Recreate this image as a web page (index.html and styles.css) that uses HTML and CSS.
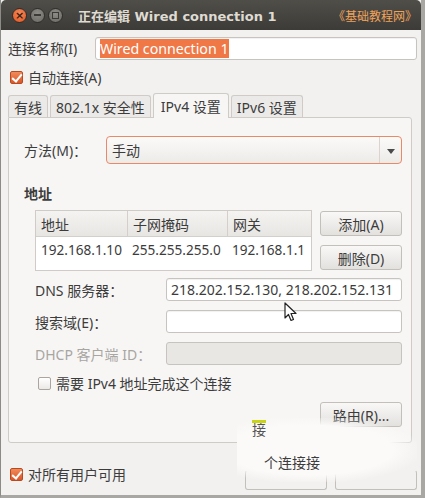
FILE: index.html
```html
<!DOCTYPE html>
<html lang="zh">
    <head>
        <meta charset="utf-8">
        <title>正在编辑 Wired connection 1</title>
        <link rel="stylesheet" href="styles.css">
    </head>
    <body>
        <div class="window">
            <div class="titlebar">
                <div class="wm-buttons">
                    <span class="wm-btn close">×</span>
                    <span class="wm-btn min"><i class="bar"></i></span>
                    <span class="wm-btn max"><i class="box"></i></span>
                </div>
                <div class="title">正在编辑 Wired connection 1</div>
                <div class="brand">《基础教程网》</div>
            </div>

            <div class="content">
                <div class="name-row">
                    <label class="name-label">连接名称(I)</label>
                    <div class="entry name-entry"><span class="selected">Wired connection 1</span></div>
                </div>

                <div class="check-row auto">
                    <span class="check on"></span>
                    <span>自动连接(A)</span>
                </div>

                <div class="tabs">
                    <div class="tab">有线</div>
                    <div class="tab">802.1x 安全性</div>
                    <div class="tab active">IPv4 设置</div>
                    <div class="tab">IPv6 设置</div>
                </div>

                <div class="panel">
                    <div class="method-row">
                        <span class="method-label">方法(M)：</span>
                        <div class="combo">
                            <span class="combo-text">手动</span>
                            <span class="combo-arrow"></span>
                        </div>
                    </div>

                    <div class="section-title">地址</div>

                    <div class="addr-row">
                        <div class="addr-table">
                            <div class="addr-head">
                                <div class="col c1">地址</div>
                                <div class="col c2">子网掩码</div>
                                <div class="col c3">网关</div>
                            </div>
                            <div class="addr-data">
                                <div class="col c1">192.168.1.10</div>
                                <div class="col c2">255.255.255.0</div>
                                <div class="col c3">192.168.1.1</div>
                            </div>
                        </div>
                        <div class="addr-buttons">
                            <div class="button">添加(A)</div>
                            <div class="button">删除(D)</div>
                        </div>
                    </div>

                    <div class="form">
                        <div class="form-row">
                            <span class="form-label">DNS 服务器：</span>
                            <div class="entry field">218.202.152.130, 218.202.152.131</div>
                        </div>
                        <div class="form-row">
                            <span class="form-label">搜索域(E)：</span>
                            <div class="entry field"></div>
                        </div>
                        <div class="form-row">
                            <span class="form-label dim">DHCP 客户端 ID：</span>
                            <div class="entry field disabled"></div>
                        </div>
                    </div>

                    <div class="check-row require">
                        <span class="check"></span>
                        <span>需要 IPv4 地址完成这个连接</span>
                    </div>

                    <div class="route-row">
                        <div class="button route">路由(R)...</div>
                    </div>
                </div>

                <div class="footer">
                    <div class="check-row">
                        <span class="check on"></span>
                        <span>对所有用户可用</span>
                    </div>
                    <div class="footer-buttons">
                        <div class="button ghost"></div>
                        <div class="button ghost"></div>
                    </div>
                </div>
            </div>

            <div class="smear">
                <span class="smear-a">接</span>
                <span class="smear-b">个连接接</span>
            </div>
            <svg class="cursor" width="14" height="20" viewBox="0 0 14 20">
                <path d="M1 1 L1 16 L4.5 12.5 L7 18.5 L9.5 17.5 L7 11.5 L12 11.5 Z" fill="#fff" stroke="#222" stroke-width="1.2" stroke-linejoin="round"/>
            </svg>
        </div>
    </body>
</html>
```

FILE: styles.css
```css
html, body {
    margin: 0;
    padding: 0;
    background: #ffffff;
}
body {
    font-family: "Noto Sans", "Noto Sans CJK SC", sans-serif;
    font-size: 14px;
    color: #3c3c3c;
}
.window {
    position: relative;
    width: 425px;
    height: 498px;
    box-sizing: border-box;
    background: #f2f1f0;
    border-left: 1px solid #8d8b88;
    border-right: 4px solid #a9a7a4;
    border-bottom: 3px solid #a9a7a4;
    overflow: hidden;
}
.titlebar {
    height: 30px;
    display: flex;
    align-items: center;
    background: linear-gradient(#4f4e49, #3c3b37);
    border-radius: 5px 5px 0 0;
    padding: 0 4px 0 11px;
}
.wm-buttons {
    display: flex;
    gap: 3px;
}
.wm-btn {
    width: 15px;
    height: 15px;
    border-radius: 50%;
    display: flex;
    align-items: center;
    justify-content: center;
    box-sizing: border-box;
    border: 1px solid #2f2e2b;
}
.wm-btn.close {
    background: radial-gradient(circle at 50% 35%, #f58a5a, #e0541f);
    color: #3b2014;
    font-family: "DejaVu Sans", sans-serif;
    font-size: 11px;
    font-weight: bold;
    line-height: 1;
}
.wm-btn.min, .wm-btn.max {
    background: radial-gradient(circle at 50% 35%, #8e8c86, #6a6863);
}
.wm-btn .bar {
    width: 7px;
    height: 2px;
    background: #3b3a36;
}
.wm-btn .box {
    width: 5px;
    height: 5px;
    border: 1px solid #3b3a36;
}
.title {
    margin-left: 15px;
    flex: 1;
    font-family: "DejaVu Sans", "Noto Sans CJK SC", sans-serif;
    font-weight: bold;
    font-size: 13px;
    color: #dfdbd2;
}
.brand {
    font-family: "Noto Sans CJK SC", sans-serif;
    font-size: 12px;
    color: #f0a35a;
}
.content {
    padding: 6px 4px 0 7px;
}
.name-row {
    display: flex;
    align-items: center;
    height: 24px;
}
.name-label {
    width: 87px;
}
.entry {
    box-sizing: border-box;
    border: 1px solid #c7c4c0;
    border-radius: 3px;
    background: #ffffff;
    height: 23px;
    display: flex;
    align-items: center;
    padding: 0 4px;
    box-shadow: inset 0 1px 1px rgba(0, 0, 0, 0.06);
    white-space: nowrap;
    overflow: hidden;
}
.name-entry {
    flex: 1;
    font-size: 14.2px;
}
.selected {
    background: #f07746;
    color: #ffffff;
    line-height: 19px;
}
.check-row {
    display: flex;
    align-items: center;
    gap: 5px;
}
.auto {
    margin: 6px 0 0 2px;
    height: 22px;
}
.check {
    width: 13px;
    height: 13px;
    box-sizing: border-box;
    border: 1px solid #aaa69f;
    border-radius: 2px;
    background: linear-gradient(#ffffff, #ebe9e6);
    position: relative;
}
.check.on {
    background: linear-gradient(#f28a5a, #d9572a);
    border-color: #b84a20;
}
.check.on::after {
    content: "";
    position: absolute;
    left: 3px;
    top: 0px;
    width: 4px;
    height: 8px;
    border: solid #ffffff;
    border-width: 0 2px 2px 0;
    transform: rotate(40deg);
}
.tabs {
    display: flex;
    gap: 2px;
    margin-top: 6px;
    height: 23px;
    align-items: flex-end;
}
.tab {
    height: 22px;
    box-sizing: border-box;
    border: 1px solid #cfccc8;
    border-bottom: none;
    border-radius: 3px 3px 0 0;
    background: #ebeae8;
    padding: 0 5px;
    display: flex;
    align-items: center;
}
.tab.active {
    height: 25px;
    background: #f7f6f5;
    padding: 0 7px;
    position: relative;
    top: 1px;
}
.panel {
    box-sizing: border-box;
    width: 404px;
    height: 326px;
    border: 1px solid #cfccc8;
    border-radius: 0 3px 3px 3px;
    background: #f7f6f5;
    padding: 18px 9px 0 15px;
}
.method-row {
    display: flex;
    align-items: center;
}
.method-label {
    width: 82px;
}
.combo {
    flex: 1;
    height: 28px;
    box-sizing: border-box;
    border: 1px solid #e8896a;
    border-radius: 4px;
    background: linear-gradient(#fbfaf9, #ecebe8);
    display: flex;
    align-items: center;
}
.combo-text {
    flex: 1;
    padding-left: 5px;
}
.combo-arrow {
    width: 21px;
    height: 100%;
    border-left: 1px solid #d8d5d1;
    position: relative;
}
.combo-arrow::after {
    content: "";
    position: absolute;
    left: 7px;
    top: 12px;
    border-left: 4px solid transparent;
    border-right: 4px solid transparent;
    border-top: 5px solid #4a4a4a;
}
.section-title {
    font-weight: bold;
    margin-top: 21px;
    height: 18px;
    line-height: 18px;
}
.addr-row {
    display: flex;
    margin-top: 7px;
    margin-left: 11px;
    gap: 8px;
}
.addr-table {
    width: 277px;
    height: 61px;
    box-sizing: border-box;
    border: 1px solid #cfccc8;
    background: #ffffff;
}
.addr-head, .addr-data {
    display: flex;
}
.addr-head {
    height: 25px;
    background: linear-gradient(#f4f3f1, #e8e6e3);
    border-bottom: 1px solid #d3d0cc;
}
.addr-data {
    height: 25px;
    font-size: 13.6px;
}
.col {
    display: flex;
    align-items: center;
    padding-left: 5px;
    box-sizing: border-box;
    white-space: nowrap;
    overflow: hidden;
}
.c1 { width: 91px; }
.c2 { width: 100px; }
.c3 { width: 84px; }
.addr-head .col + .col {
    border-left: 1px solid #d3d0cc;
}
.addr-buttons {
    display: flex;
    flex-direction: column;
    gap: 9px;
    padding-top: 1px;
}
.button {
    width: 82px;
    height: 25px;
    box-sizing: border-box;
    border: 1px solid #c3c0bb;
    border-radius: 3px;
    background: linear-gradient(#f9f8f7, #e3e1de);
    display: flex;
    align-items: center;
    justify-content: center;
}
.form {
    margin-left: 11px;
    margin-top: 7px;
    display: flex;
    flex-direction: column;
    gap: 9px;
}
.form-row {
    display: flex;
    align-items: center;
}
.form-label {
    width: 131px;
}
.form-label.dim {
    color: #a8a6a2;
}
.field {
    width: 236px;
    height: 23px;
    font-size: 14px;
    padding-left: 4px;
}
.field.disabled {
    background: #e8e7e4;
    box-shadow: none;
}
.require {
    margin: 9px 0 0 14px;
    height: 18px;
}
.route-row {
    display: flex;
    justify-content: flex-end;
    margin-top: 10px;
}
.footer {
    display: flex;
    align-items: center;
    justify-content: space-between;
    margin-top: 15px;
    padding-left: 2px;
}
.footer-buttons {
    display: flex;
    gap: 8px;
    margin-top: 12px;
}
.button.ghost {
    height: 20px;
    background: #f2f1f0;
    border-top-color: #f2f1f0;
}
.smear {
    position: absolute;
    left: 236px;
    top: 418px;
    width: 180px;
    height: 64px;
    background: radial-gradient(ellipse at 40% 50%, #fbfaf9 55%, rgba(251, 250, 249, 0) 75%);
}
.smear-a {
    position: absolute;
    left: 15px;
    top: 2px;
    font-size: 14px;
    color: #555;
    border-top: 3px solid #c8d414;
    line-height: 14px;
}
.smear-b {
    position: absolute;
    left: 27px;
    top: 34px;
    font-size: 14px;
    color: #3c3c3c;
}
.cursor {
    position: absolute;
    left: 283px;
    top: 302px;
}
```
